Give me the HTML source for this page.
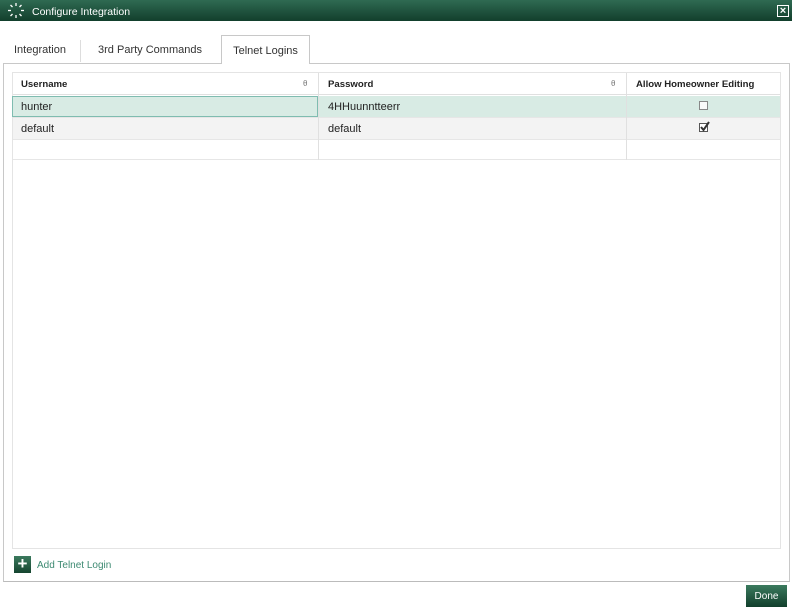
<!DOCTYPE html>
<html><head><style>
*{box-sizing:border-box;margin:0;padding:0}
body{width:792px;height:612px;background:#fff;font-family:"Liberation Sans",sans-serif;font-size:11px;color:#222;position:relative;overflow:hidden}
.abs{position:absolute}
.title{left:0;top:0;width:792px;height:21px;background:linear-gradient(#2f6a52,#123f2c);color:#fff;font-size:10.5px;line-height:24px}
.tab{top:36px;height:28px;line-height:28px;font-size:11px;color:#333;text-align:center}
.cell{position:absolute;line-height:21px;padding-left:9px;font-size:11px}
.hd{font-weight:bold;font-size:9.6px;line-height:23px}
</style></head><body>
<div class="abs title"><span style="position:absolute;left:32px">Configure Integration</span>
<svg class="abs" style="left:7px;top:2px" width="18" height="17" viewBox="0 0 18 17"><g stroke="#fff" stroke-width="1.3"><line x1="9" y1="1" x2="9" y2="4"/><line x1="9" y1="13" x2="9" y2="16"/><line x1="1" y1="8.5" x2="4" y2="8.5"/><line x1="14" y1="8.5" x2="17" y2="8.5"/><line x1="3.5" y1="3" x2="5.5" y2="5"/><line x1="12.5" y1="12" x2="14.5" y2="14"/><line x1="14.5" y1="3" x2="12.5" y2="5"/><line x1="5.5" y1="12" x2="3.5" y2="14"/></g></svg>
<div class="abs" style="left:777px;top:5px;width:12px;height:12px;border:1px solid #fff;color:#fff;font-size:11px;line-height:10px;text-align:center;font-weight:bold">×</div>
</div>
<div class="abs" style="left:3px;top:63px;width:787px;height:519px;border:1px solid #c8c8c8;border-bottom-color:#bbb"></div>
<div class="abs tab" style="left:6px;width:68px">Integration</div>
<div class="abs" style="left:80px;top:40px;width:1px;height:22px;background:#ddd"></div>
<div class="abs tab" style="left:86px;width:128px">3rd Party Commands</div>
<div class="abs tab" style="left:221px;top:35px;width:89px;height:29px;border:1px solid #c8c8c8;border-bottom:none;background:#fff;line-height:30px">Telnet Logins</div>
<div class="abs" style="left:12px;top:72px;width:769px;height:477px;border:1px solid #e4e4e4;background:#fff"></div>
<div class="abs" style="left:13px;top:73px;width:767px;height:22px;border-bottom:1px solid #e0e0e0"></div>
<div class="abs" style="left:13px;top:96px;width:767px;height:21px;background:#d8ebe4"></div>
<div class="abs" style="left:12px;top:96px;width:306px;height:21px;border:1px solid #7fbcb0"></div>
<div class="abs" style="left:13px;top:117px;width:767px;height:22px;background:#f3f3f3;border-top:1px solid #e6e6e6"></div>
<div class="abs" style="left:13px;top:139px;width:767px;height:21px;border-top:1px solid #e6e6e6;border-bottom:1px solid #e6e6e6"></div>
<div class="abs" style="left:318px;top:73px;width:1px;height:87px;background:#e0e0e0"></div>
<div class="abs" style="left:626px;top:73px;width:1px;height:87px;background:#e0e0e0"></div>
<div class="cell hd" style="left:12px;top:73px">Username</div>
<div class="cell hd" style="left:319px;top:73px">Password</div>
<div class="cell hd" style="left:627px;top:73px">Allow Homeowner Editing</div>
<div class="abs" style="left:303px;top:79px;font-size:8px;color:#777">θ</div>
<div class="abs" style="left:611px;top:79px;font-size:8px;color:#777">θ</div>
<div class="cell" style="left:12px;top:97px">hunter</div>
<div class="cell" style="left:319px;top:97px">4HHuunntteerr</div>
<div class="cell" style="left:12px;top:119px">default</div>
<div class="cell" style="left:319px;top:119px">default</div>
<div class="abs" style="left:699px;top:101px;width:9px;height:9px;border:1px solid #888;background:#fafafa"></div>
<div class="abs" style="left:699px;top:123px;width:9px;height:9px;border:1px solid #555;background:#fff"></div>
<svg class="abs" style="left:699px;top:120px" width="12" height="12"><path d="M2 7 L4.5 10 L10 2" stroke="#333" stroke-width="2" fill="none"/></svg>
<div class="abs" style="left:14px;top:556px;width:17px;height:17px;background:linear-gradient(#3b7a5e,#15442f);color:#fff;font-weight:bold;font-size:17px;line-height:16px;text-align:center">+</div>
<div class="abs" style="left:37px;top:560px;color:#3d8a72;font-size:10px">Add Telnet Login</div>
<div class="abs" style="left:746px;top:585px;width:41px;height:22px;background:linear-gradient(#3b7a5e,#123f2c);color:#fff;font-size:10px;line-height:24px;text-align:center">Done</div>
</body></html>
